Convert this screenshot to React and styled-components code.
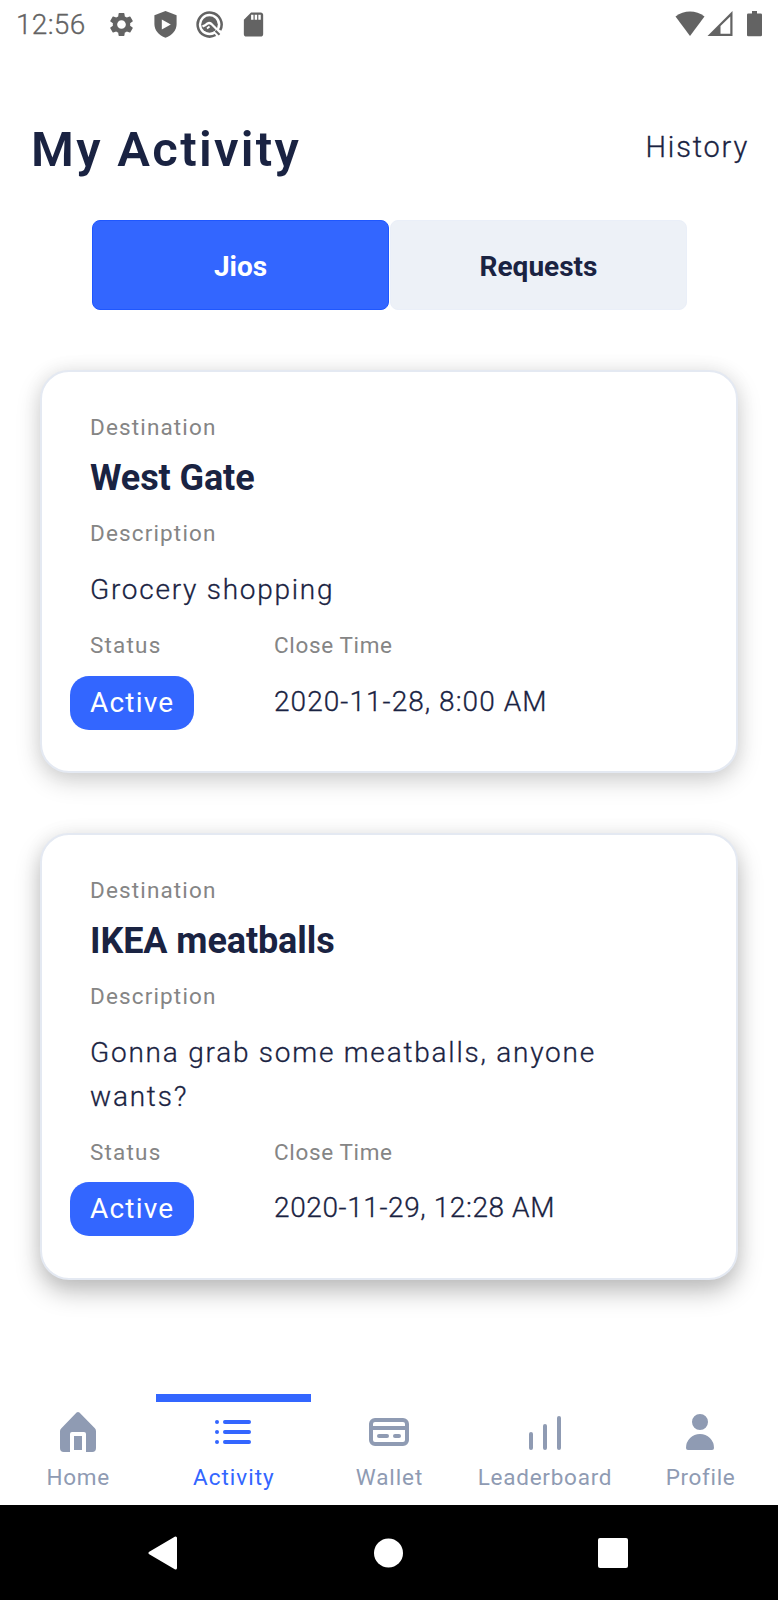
import React from "react";
import styled, { createGlobalStyle } from "styled-components";
import { MdSettings, MdSdCard } from "react-icons/md";

const GlobalStyle = createGlobalStyle`
  * { box-sizing: border-box; }
  body { margin: 0; background: #fff; font-family: Roboto, "Liberation Sans", sans-serif; }
  svg { display: block; flex: none; }
`;

const Screen = styled.div`
  width: 778px;
  height: 1600px;
  display: flex;
  flex-direction: column;
  background: #fff;
  color: #1a2342;
  overflow: hidden;
`;

const StatusBar = styled.div`
  height: 48px;
  padding: 0 15px 0 16px;
  display: flex;
  justify-content: space-between;
  align-items: center;
  color: #636363;
`;

const StatusGroup = styled.div`
  display: flex;
  align-items: center;
`;

const Clock = styled.span`
  width: 91px;
  font-size: 28px;
  font-weight: 300;
  -webkit-text-stroke: 0.3px currentColor;
  line-height: 48px;
  letter-spacing: 0.3px;
  padding-top: 1px;
`;

const StatusIcons = styled.div`
  display: flex;
  align-items: center;
  gap: 15px;
`;

const SystemIcons = styled.div`
  display: flex;
  align-items: center;
  gap: ${(p) => p.$gap || 0}px;
`;

const Header = styled.header`
  height: 172px;
  padding: 74px 29px 0 34px;
  display: flex;
  justify-content: space-between;
  align-items: flex-start;
`;

const Title = styled.h1`
  margin: 0 0 0 -3px;
  font-size: 49px;
  line-height: 56px;
  font-weight: 600;
  letter-spacing: ${(p) => p.$track}px;
`;

const HistoryLink = styled.span`
  font-size: 29px;
  line-height: 50px;
  font-weight: 300;
  -webkit-text-stroke: 0.3px currentColor;
  letter-spacing: ${(p) => p.$track}px;
`;

const Tabs = styled.div`
  display: flex;
  gap: 1px;
  margin: 0 91px 0 92px;
  height: 90px;
`;

const Tab = styled.button`
  flex: 1;
  padding: 2px 0 0;
  border: 1px solid ${(p) => (p.$active ? "#1f57ff" : "#eaeff8")};
  border-radius: 8px;
  background: ${(p) => (p.$active ? "#3366ff" : "#edf1f7")};
  color: ${(p) => (p.$active ? "#fff" : "#1a2342")};
  font: 700 28px Roboto, sans-serif;
`;

const List = styled.main`
  flex: 1;
  display: flex;
  flex-direction: column;
  gap: 59.5px;
  padding: 60px 40px 0;
`;

const Card = styled.article`
  border: 2px solid #e4e9f2;
  border-radius: 29px;
  padding: 40px 80px 41.5px 48px;
  background: #fff;
  box-shadow: 0 ${(p) => p.$lift}px 24px rgba(0, 0, 0, ${(p) => p.$shade}),
    0 0 20px rgba(0, 0, 0, 0.06);
`;

const Label = styled.div`
  font-size: 22.5px;
  line-height: 30px;
  color: #858585;
  letter-spacing: ${(p) => p.$track || 0}px;
`;

const Place = styled.h2`
  margin: 14px 0 18px;
  font-size: 36px;
  line-height: 44px;
  font-weight: 700;
  letter-spacing: -0.1px;
`;

const Body = styled.div`
  margin: 20px 0 18px;
  font-size: 28px;
  line-height: 44px;
  font-weight: 300;
  -webkit-text-stroke: 0.3px currentColor;
  letter-spacing: ${(p) => p.$track || 0}px;
`;

const Facts = styled.div`
  display: flex;
`;

const Fact = styled.div`
  width: ${(p) => (p.$wide ? "auto" : "184px")};
`;

const Pill = styled.div`
  width: 124px;
  height: 54px;
  margin: 15.5px 0 0 -20px;
  padding-left: 20px;
  border-radius: 19px;
  background: #3366ff;
  color: #fff;
  font-size: 28px;
  line-height: 54px;
  letter-spacing: ${(p) => p.$track || 0}px;
`;

const CloseTime = styled.div`
  margin-top: 15.5px;
  margin-bottom: 3px;
  font-size: 28px;
  line-height: 51px;
  font-weight: 300;
  -webkit-text-stroke: 0.3px currentColor;
  letter-spacing: ${(p) => p.$track || 0}px;
`;

const BottomNav = styled.nav`
  height: 111px;
  display: grid;
  grid-template-columns: repeat(5, 1fr);
`;

const NavItem = styled.div`
  display: flex;
  flex-direction: column;
  align-items: center;
  gap: 6px;
  padding-top: 6px;
  border-top: 8px solid ${(p) => (p.$active ? "#3366ff" : "transparent")};
  color: ${(p) => (p.$active ? "#3366ff" : "#8f9bb3")};
`;

const NavLabel = styled.span`
  font-size: 22.5px;
  line-height: 30px;
  letter-spacing: ${(p) => p.$track}px;
  margin-right: -${(p) => p.$track}px;
`;

const SystemNav = styled.div`
  height: 95px;
  padding: 0 150px 0 148px;
  display: flex;
  justify-content: space-between;
  align-items: center;
  background: #000;
`;

const Eva = ({ children }) => (
  <svg width="48" height="48" viewBox="0 0 24 24" fill="currentColor">{children}</svg>
);

const HomeIcon = () => (
  <Eva>
    <rect x="10" y="14" width="4" height="7" />
    <path d="M20.42 10.18 12.71 2.3a1 1 0 0 0-1.42 0l-7.71 7.89A2 2 0 0 0 3 11.62V20a2 2 0 0 0 1.89 2H8v-9a1 1 0 0 1 1-1h6a1 1 0 0 1 1 1v9h3.11A2 2 0 0 0 21 20v-8.38a2.07 2.07 0 0 0-.58-1.44Z" />
  </Eva>
);
const ListIcon = () => (
  <Eva>
    {[7, 12, 17].map((y) => (
      <g key={y}>
        <circle cx="4" cy={y} r="1" />
        <rect x="7" y={y - 1} width="14" height="2" rx="0.95" />
      </g>
    ))}
  </Eva>
);
const WalletIcon = () => (
  <Eva>
    <path d="M19 5H5a3 3 0 0 0-3 3v8a3 3 0 0 0 3 3h14a3 3 0 0 0 3-3V8a3 3 0 0 0-3-3ZM4 8a1 1 0 0 1 1-1h14a1 1 0 0 1 1 1v1H4Zm16 8a1 1 0 0 1-1 1H5a1 1 0 0 1-1-1v-5h16Z" />
    <rect x="6" y="13" width="6" height="2" rx="1" />
    <rect x="14" y="13" width="4" height="2" rx="1" />
  </Eva>
);
const ChartIcon = () => (
  <Eva>
    <rect x="4" y="12" width="2" height="9" rx="1" />
    <rect x="11" y="8" width="2" height="13" rx="1" />
    <rect x="18" y="4" width="2" height="17" rx="1" />
  </Eva>
);
const PersonIcon = () => (
  <Eva>
    <path d="M12 11a4 4 0 1 0-4-4 4 4 0 0 0 4 4ZM18 21a1 1 0 0 0 1-1 7 7 0 0 0-14 0 1 1 0 0 0 1 1Z" />
  </Eva>
);

const ShieldIcon = () => (
  <svg width="29" height="29" viewBox="0 0 29 29">
    <path d="M14.5 1 25.600 5.300V14c0 6.200-4.400 11.300-11.100 13.800C7.800 25.300 3.400 20.200 3.400 14V5.300Z" fill="currentColor" />
    <path d="M10.800 9.500v10l9-5Z" fill="#fff" />
  </svg>
);
const RadarIcon = () => (
  <svg width="29" height="29" viewBox="0 0 29 29" fill="none" stroke="currentColor">
    <path d="M20.500 25A12 12 0 1 1 25.200 20.200" strokeWidth="2.500" />
    <circle cx="14.500" cy="14.500" r="8.300" fill="currentColor" stroke="none" />
    <path d="M7.500 16.500 10.500 15Q13.500 11.500 16.500 14L24.500 22" stroke="#fff" strokeWidth="2.300" />
    <path d="M12 18.500 14.500 16.500" stroke="#fff" strokeWidth="1.800" />
    <path d="M20.500 20.800 24.500 24.800" strokeWidth="2.200" />
  </svg>
);
const WifiIcon = () => (
  <svg width="30" height="26" viewBox="0 0 30 26">
    <path d="M.500 5.500C9-1.300 21-1.300 29.500 5.500L15 25Z" fill="currentColor" />
  </svg>
);
const SignalIcon = () => (
  <svg width="26" height="26" viewBox="0 0 26 26">
    <path fillRule="evenodd" d="M25.500 0v25H.500ZM23.300 5.600 13.500 15v7.800h9.800Z" fill="currentColor" />
  </svg>
);
const BatteryIcon = () => (
  <svg width="16" height="26" viewBox="0 0 16 26">
    <path d="M5 0h5v2.500h3.700a1.300 1.300 0 0 1 1.300 1.300V24a1.300 1.300 0 0 1-1.300 1.300H1.300A1.300 1.300 0 0 1 0 24V3.800a1.300 1.300 0 0 1 1.300-1.300H5Z" fill="currentColor" />
  </svg>
);

const jios = [
  { place: "West Gate", text: "Grocery shopping", textTrack: 1.75, close: "2020-11-28, 8:00 AM", closeTrack: 1.05, lift: 8, shade: 0.18 },
  { place: "IKEA meatballs", text: "Gonna grab some meatballs, anyone wants?", textTrack: 1.78, close: "2020-11-29, 12:28 AM", closeTrack: 0.6, lift: 12, shade: 0.25 },
];

const navItems = [
  { name: "Home", Icon: HomeIcon, track: 0.7 },
  { name: "Activity", Icon: ListIcon, track: 1 },
  { name: "Wallet", Icon: WalletIcon, track: 0.9 },
  { name: "Leaderboard", Icon: ChartIcon, track: 0.75 },
  { name: "Profile", Icon: PersonIcon, track: 0.65 },
];

function JioCard({ jio }) {
  return (
    <Card $lift={jio.lift} $shade={jio.shade}>
      <Label $track={1.15}>Destination</Label>
      <Place>{jio.place}</Place>
      <Label $track={1.15}>Description</Label>
      <Body $track={jio.textTrack}>{jio.text}</Body>
      <Facts>
        <Fact>
          <Label $track={1.2}>Status</Label>
          <Pill $track={1.2}>Active</Pill>
        </Fact>
        <Fact $wide>
          <Label $track={0.65}>Close Time</Label>
          <CloseTime $track={jio.closeTrack}>{jio.close}</CloseTime>
        </Fact>
      </Facts>
    </Card>
  );
}

export default function App() {
  return (
    <Screen>
      <GlobalStyle />
      <StatusBar>
        <StatusGroup>
          <Clock>12:56</Clock>
          <StatusIcons>
            <MdSettings size={29} />
            <ShieldIcon />
            <RadarIcon />
            <MdSdCard size={29} />
          </StatusIcons>
        </StatusGroup>
        <SystemIcons $gap={14}>
          <SystemIcons $gap={2}>
            <WifiIcon />
            <SignalIcon />
          </SystemIcons>
          <BatteryIcon />
        </SystemIcons>
      </StatusBar>
      <Header>
        <Title $track={2.3}>My Activity</Title>
        <HistoryLink $track={1.8}>History</HistoryLink>
      </Header>
      <Tabs>
        <Tab $active>Jios</Tab>
        <Tab>Requests</Tab>
      </Tabs>
      <List>
        {jios.map((jio) => (
          <JioCard key={jio.place} jio={jio} />
        ))}
      </List>
      <BottomNav>
        {navItems.map(({ name, Icon, track }) => (
          <NavItem key={name} $active={name === "Activity"}>
            <Icon />
            <NavLabel $track={track}>{name}</NavLabel>
          </NavItem>
        ))}
      </BottomNav>
      <SystemNav>
        <svg width="30" height="34" viewBox="0 0 30 34">
          <path d="M2 17 27.500 2v30Z" fill="#fff" stroke="#fff" strokeWidth="3" strokeLinejoin="round" />
        </svg>
        <svg width="30" height="30" viewBox="0 0 30 30">
          <circle cx="15.500" cy="15" r="14.500" fill="#fff" />
        </svg>
        <svg width="30" height="30" viewBox="0 0 30 30">
          <rect width="30" height="30" rx="2" fill="#fff" />
        </svg>
      </SystemNav>
    </Screen>
  );
}
